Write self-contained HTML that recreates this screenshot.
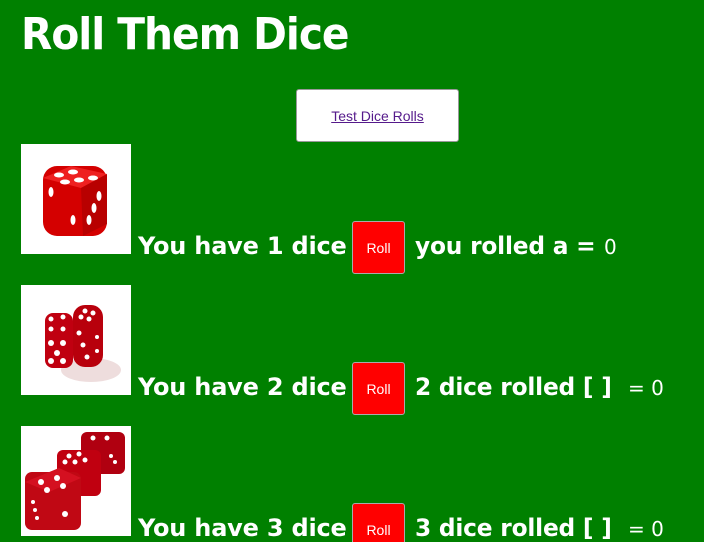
<!DOCTYPE html>
<html><head><meta charset="utf-8"><style>
html,body{margin:0;width:704px;height:542px;overflow:hidden}
body{background:#008000;position:relative;font-family:"DejaVu Sans","Liberation Sans",sans-serif;color:#fff}
.a{position:absolute;white-space:nowrap;line-height:1}
.b{font-weight:bold;font-size:24px;letter-spacing:-0.2px}
.r{font-size:20px}
.roll{position:absolute;width:51px;height:51px;background:#f00;border:1.5px solid #aaa;border-radius:3px;font:14px "Liberation Sans",Arial,sans-serif;color:#fff;display:flex;align-items:center;justify-content:center}
.img{position:absolute;left:21px;width:110px;height:110px;background:#fff}
</style></head><body>
<div class="a" style="left:21px;top:13px;font-size:44px;font-weight:bold;letter-spacing:-1.1px;transform:scaleX(0.925);transform-origin:0 0">Roll Them Dice</div>
<div style="position:absolute;left:296px;top:89px;width:161px;height:51px;background:#fff;border:1.5px solid #999;border-radius:3px;display:flex;align-items:center;justify-content:center;font:14px 'Liberation Sans',Arial,sans-serif;color:#551a8b;text-decoration:underline">Test Dice Rolls</div>

<svg class="img" style="top:144px" viewBox="0 0 110 110">
<rect x="22" y="22" width="64" height="70" rx="14" fill="#d40000"/>
<path d="M22 34 L50 22 L86 30 L60 44 Z" fill="#ee2020"/>
<path d="M60 44 L86 30 L86 80 L62 92 Z" fill="#b80000"/>
<g fill="#fff"><ellipse cx="38" cy="31" rx="5" ry="2.5"/><ellipse cx="52" cy="28" rx="5" ry="2.5"/><ellipse cx="58" cy="36" rx="5" ry="2.5"/><ellipse cx="72" cy="34" rx="5" ry="2.5"/><ellipse cx="44" cy="38" rx="5" ry="2.5"/><ellipse cx="30" cy="48" rx="2.5" ry="5"/><ellipse cx="52" cy="76" rx="2.5" ry="5"/><ellipse cx="78" cy="52" rx="2.5" ry="5"/><ellipse cx="73" cy="64" rx="2.5" ry="5"/><ellipse cx="68" cy="76" rx="2.5" ry="5"/></g>
</svg>
<div class="a b" style="left:138px;top:234px">You have 1 dice</div>
<div class="roll" style="left:352px;top:221px">Roll</div>
<div class="a b" style="left:415px;top:234px;transform:scaleX(0.97);transform-origin:0 0">you rolled a =</div>
<div class="a r" style="left:604px;top:237px">0</div>

<svg class="img" style="top:285px" viewBox="0 0 110 110">
<ellipse cx="70" cy="85" rx="30" ry="12" fill="#eedddd"/>
<rect x="24" y="28" width="28" height="55" rx="8" fill="#c00010"/>
<rect x="52" y="20" width="30" height="62" rx="12" fill="#b8000c"/>
<g fill="#fff"><circle cx="30" cy="34" r="2.5"/><circle cx="42" cy="32" r="2.5"/><circle cx="30" cy="44" r="2.5"/><circle cx="42" cy="44" r="2.5"/><circle cx="30" cy="58" r="3"/><circle cx="42" cy="58" r="3"/><circle cx="36" cy="68" r="3"/><circle cx="30" cy="76" r="3"/><circle cx="42" cy="76" r="3"/><circle cx="64" cy="26" r="2.5"/><circle cx="72" cy="28" r="2.5"/><circle cx="60" cy="32" r="2.5"/><circle cx="68" cy="34" r="2.5"/><circle cx="58" cy="48" r="2.5"/><circle cx="62" cy="60" r="2.5"/><circle cx="66" cy="72" r="2.5"/><circle cx="76" cy="52" r="2"/><circle cx="76" cy="66" r="2"/></g>
</svg>
<div class="a b" style="left:138px;top:375px">You have 2 dice</div>
<div class="roll" style="left:352px;top:362px">Roll</div>
<div class="a b" style="left:415px;top:375px;transform:scaleX(0.97);transform-origin:0 0">2 dice rolled [ ]</div>
<div class="a r" style="left:628px;top:378px">= 0</div>

<svg class="img" style="top:426px" viewBox="0 0 110 110">
<rect x="60" y="6" width="44" height="42" rx="6" fill="#b00010"/>
<rect x="36" y="24" width="44" height="46" rx="6" fill="#c00010"/>
<rect x="4" y="46" width="56" height="58" rx="7" fill="#c00814"/>
<path d="M4 56 L38 42 L60 52 L28 66 Z" fill="#d41020"/>
<g fill="#fff"><circle cx="72" cy="12" r="2.5"/><circle cx="86" cy="12" r="2.5"/><circle cx="48" cy="30" r="2.5"/><circle cx="58" cy="28" r="2.5"/><circle cx="44" cy="36" r="2.5"/><circle cx="54" cy="36" r="2.5"/><circle cx="64" cy="34" r="2.5"/><circle cx="20" cy="56" r="3"/><circle cx="36" cy="52" r="3"/><circle cx="26" cy="64" r="3"/><circle cx="42" cy="60" r="3"/><circle cx="12" cy="76" r="2"/><circle cx="14" cy="84" r="2"/><circle cx="16" cy="92" r="2"/><circle cx="44" cy="88" r="3"/><circle cx="90" cy="30" r="2"/><circle cx="94" cy="36" r="2"/></g>
</svg>
<div class="a b" style="left:138px;top:516px">You have 3 dice</div>
<div class="roll" style="left:352px;top:503px">Roll</div>
<div class="a b" style="left:415px;top:516px;transform:scaleX(0.97);transform-origin:0 0">3 dice rolled [ ]</div>
<div class="a r" style="left:628px;top:519px">= 0</div>
</body></html>
